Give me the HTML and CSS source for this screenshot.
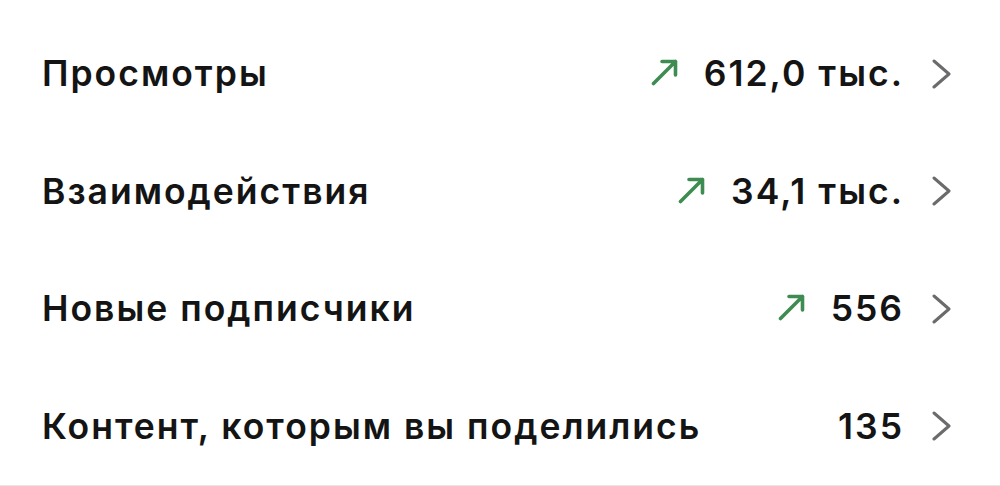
FILE: index.html
```html
<!DOCTYPE html>
<html lang="ru">
<head>
<meta charset="utf-8">
<title>Статистика</title>
<link rel="stylesheet" href="styles.css">
</head>
<body>
<ul class="stats">
  <li class="stat">
    <span class="stat-label">Просмотры</span>
    <span class="stat-value">
      <svg class="trend" viewBox="0 0 28 28"><path d="M2.5 25.5 L24.5 3.5 M11 3.5 H24.5 V17"/></svg>
      <span class="num">612,0 тыс.</span>
    </span>
    <svg class="chevron" viewBox="0 0 20 30"><path d="M2 2 L17 15 L2 28"/></svg>
  </li>
  <li class="stat">
    <span class="stat-label">Взаимодействия</span>
    <span class="stat-value">
      <svg class="trend" viewBox="0 0 28 28"><path d="M2.5 25.5 L24.5 3.5 M11 3.5 H24.5 V17"/></svg>
      <span class="num">34,1 тыс.</span>
    </span>
    <svg class="chevron" viewBox="0 0 20 30"><path d="M2 2 L17 15 L2 28"/></svg>
  </li>
  <li class="stat">
    <span class="stat-label">Новые подписчики</span>
    <span class="stat-value">
      <svg class="trend" viewBox="0 0 28 28"><path d="M2.5 25.5 L24.5 3.5 M11 3.5 H24.5 V17"/></svg>
      <span class="num">556</span>
    </span>
    <svg class="chevron" viewBox="0 0 20 30"><path d="M2 2 L17 15 L2 28"/></svg>
  </li>
  <li class="stat">
    <span class="stat-label">Контент, которым вы поделились</span>
    <span class="stat-value">
      <span class="num">135</span>
    </span>
    <svg class="chevron" viewBox="0 0 20 30"><path d="M2 2 L17 15 L2 28"/></svg>
  </li>
</ul>
</body>
</html>
```

FILE: styles.css
```css
html, body {
  margin: 0;
  padding: 0;
  background: #ffffff;
}

body {
  width: 1000px;
  height: 486px;
  overflow: hidden;
  font-family: Inter, "Noto Sans", "Liberation Sans", sans-serif;
  color: #141414;
  display: flex;
  flex-direction: column;
}

.stats {
  list-style: none;
  margin: 0;
  padding: 15px 0 0;
  flex: 1;
  border-bottom: 2px solid #e6e6e6;
}

.stat {
  height: 117.5px;
  display: flex;
  align-items: center;
  padding: 0 48px 0 42px;
}

.stat-label,
.num {
  font-size: 35.5px;
  font-weight: 600;
  letter-spacing: 2px;
}

.stat-label {
  flex: 1;
}

.stat-value {
  display: flex;
  align-items: center;
  gap: 25px;
}

.trend {
  width: 28px;
  height: 28px;
  margin-top: -3px;
  fill: none;
  stroke: #3f8c52;
  stroke-width: 3.6;
  stroke-linecap: round;
  stroke-linejoin: round;
}

.chevron {
  width: 20px;
  height: 30px;
  margin-left: 28px;
  fill: none;
  stroke: #6b6b6e;
  stroke-width: 3;
  stroke-linecap: round;
  stroke-linejoin: round;
}
```
